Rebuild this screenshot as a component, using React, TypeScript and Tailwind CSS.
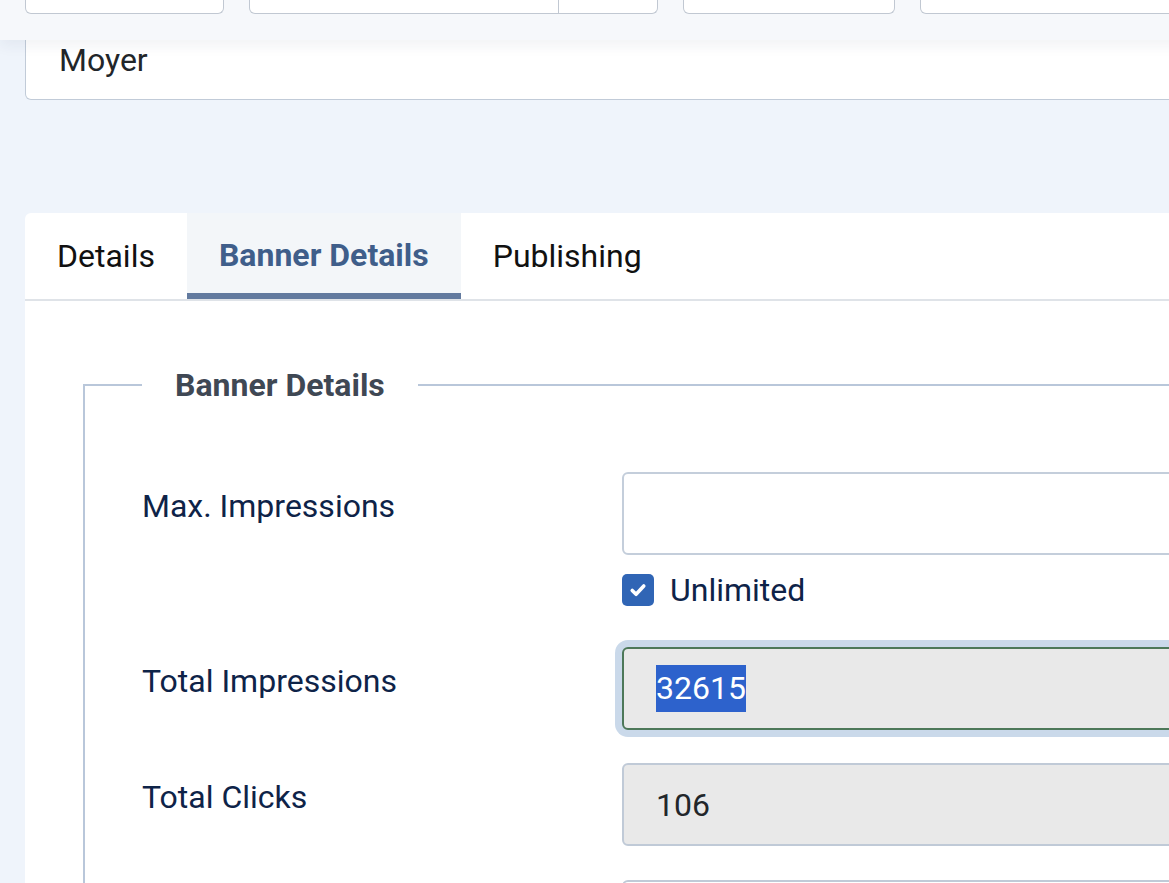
export default function App() {
  return (
    <div
      className="w-screen h-screen overflow-hidden bg-[#eff4fb] text-[32px]"
      style={{ fontFamily: 'Roboto, "Noto Sans", sans-serif' }}
    >
      <div className="w-[1500px]">
        <Toolbar />
        <div className="pl-[25px]">
          <div className="h-[60px] bg-white border border-t-0 border-[#c1cbd8] rounded-b-md flex items-center pl-[33px] pb-[20px] text-[#22262a]">
            Moyer
          </div>
        </div>
        <div className="pl-[25px] pt-[113px]">
          <div className="bg-white rounded-tl-md">
            <Tabs />
            <div className="pt-[60px] pl-[58px]">
              <BannerFieldset />
            </div>
          </div>
        </div>
      </div>
    </div>
  );
}

function Toolbar() {
  return (
    <div className="relative z-10 h-[40px] bg-[#f6f8fb] shadow-[0_6px_14px_rgba(30,50,90,0.06)]">
      <div className="flex items-start gap-[25px] pl-[25px]">
        <div className="w-[199px] h-[14px] bg-white border border-t-0 border-[#c1c8d2] rounded-b-md" />
        <div className="w-[409px] h-[14px] bg-white border border-t-0 border-[#c1c8d2] rounded-b-md flex">
          <div className="w-[309px] border-r border-[#c1c8d2]" />
        </div>
        <div className="w-[212px] h-[14px] bg-white border border-t-0 border-[#c1c8d2] rounded-b-md" />
        <div className="w-[400px] h-[14px] bg-white border border-t-0 border-[#c1c8d2] rounded-b-md" />
      </div>
    </div>
  );
}

function Tabs() {
  const tabs = ['Details', 'Banner Details', 'Publishing'];
  return (
    <div className="flex border-b-2 border-[#dfe3e8]">
      {tabs.map((t) => {
        const active = t === 'Banner Details';
        return (
          <div
            key={t}
            className={
              active
                ? 'h-[86px] px-[32px] flex items-center bg-[#f3f6f9] text-[#3f5e8a] font-bold border-b-[6px] border-[#627a9f] -mb-[2px] pt-[4px]'
                : 'h-[86px] px-[32px] flex items-center text-[#111]'
            }
          >
            {t}
          </div>
        );
      })}
    </div>
  );
}

function BannerFieldset() {
  const label = 'w-[480px] pt-[10px] text-[#0e2348]';
  return (
    <fieldset className="border-2 border-r-0 border-b-0 border-[#b9c7da] pl-[57px] pt-[63px]">
      <legend className="px-[33px] font-bold text-[#3f4854]">Banner Details</legend>

      <div className="flex">
        <label className={label}>Max. Impressions</label>
        <div className="flex-1">
          <div className="h-[83px] bg-white border-2 border-[#c4cedb] rounded-md" />
          <div className="flex items-center gap-[16px] mt-[19px]">
            <span className="w-[32px] h-[32px] rounded-[5px] bg-[#3065b5] flex items-center justify-center">
              <svg width="22" height="22" viewBox="0 0 16 16" fill="none">
                <path d="M3.8 8.3l2.8 2.8 5.6-6" stroke="white" strokeWidth="2.6" strokeLinecap="round" strokeLinejoin="round" />
              </svg>
            </span>
            <span className="text-[#0e2348] leading-none">Unlimited</span>
          </div>
        </div>
      </div>

      <div className="flex mt-[41px]">
        <label className={label}>Total Impressions</label>
        <div className="flex-1">
          <div className="h-[83px] bg-[#e9e9e9] border-2 border-[#4d7859] rounded-md shadow-[0_0_0_7px_#cad9ea] flex items-center pl-[32px] text-[#22262a]">
            <span className="bg-[#2d62cc] text-white leading-[47px]">32615</span>
          </div>
        </div>
      </div>

      <div className="flex mt-[33px]">
        <label className={label}>Total Clicks</label>
        <div className="flex-1">
          <div className="h-[83px] bg-[#e9e9e9] border-2 border-[#c0cad7] rounded-md flex items-center pl-[32px] text-[#22262a]">
            106
          </div>
        </div>
      </div>

      <div className="flex mt-[34px]">
        <label className={label}>&nbsp;</label>
        <div className="flex-1">
          <div className="h-[83px] bg-white border-2 border-[#c0cad7] rounded-md" />
        </div>
      </div>
    </fieldset>
  );
}
